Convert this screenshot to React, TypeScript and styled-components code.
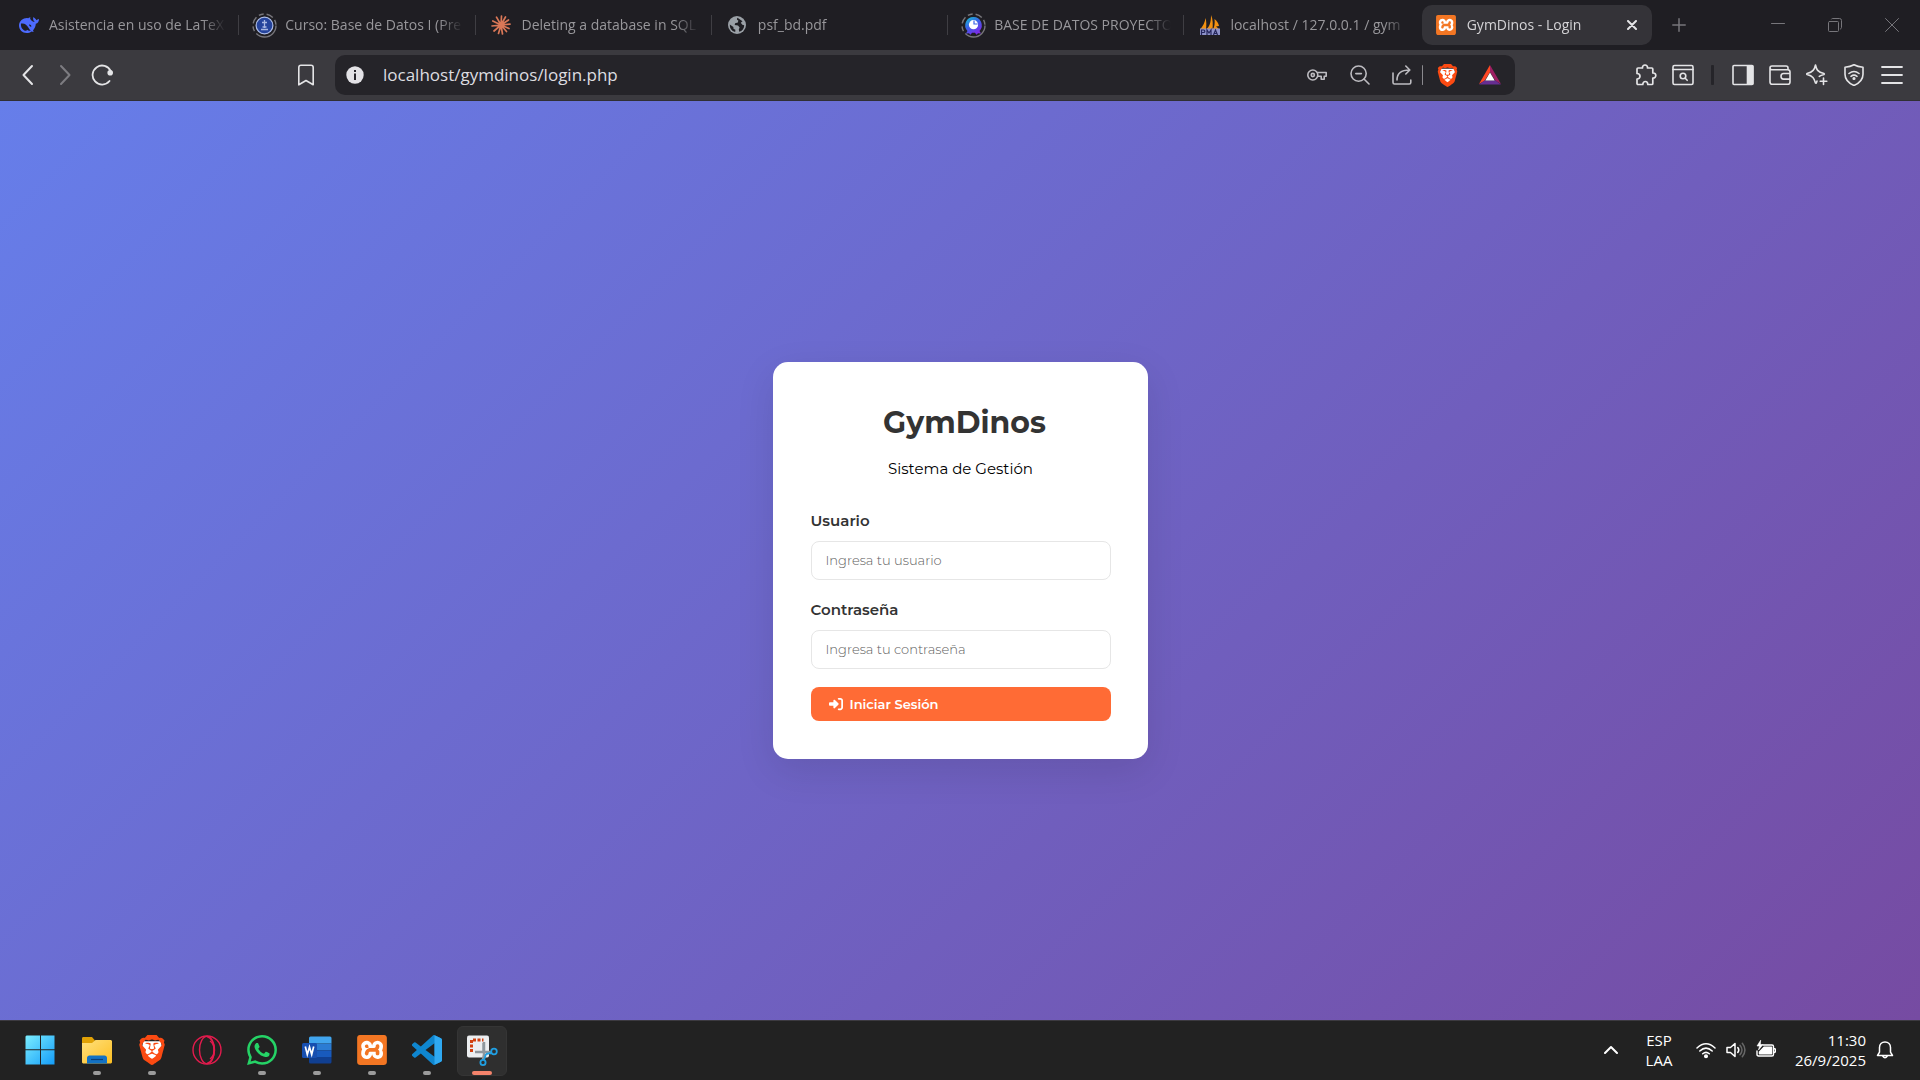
import React from 'react';
import styled, { createGlobalStyle } from 'styled-components';
import { SiBrave, SiXampp, SiWhatsapp } from 'react-icons/si';
import { FaRightToBracket } from 'react-icons/fa6';

const GlobalStyle = createGlobalStyle`
  *, *::before, *::after { box-sizing: border-box; }
  body { margin: 0; font-family: "Segoe UI", "Open Sans", "Noto Sans", sans-serif; }
  button, input { font: inherit; }
`;

const Screen = styled.div`
  display: flex;
  flex-direction: column;
  min-height: 100vh;
`;

/* ---------- tab strip ---------- */

const TabStrip = styled.header`
  display: flex;
  align-items: center;
  height: 50px;
  padding-left: 4px;
  background: #1f1e23;
`;

const TabList = styled.nav`
  display: flex;
  flex: 0 1 1654px;
  min-width: 0;
`;

const Tab = styled.div<{ $active?: boolean; $divided?: boolean }>`
  display: flex;
  align-items: center;
  flex: 1 1 0;
  min-width: 0;
  height: 40px;
  margin-right: 6px;
  padding: 0 8px 0 12px;
  border-radius: 10px;
  background: ${p => (p.$active ? '#343338' : 'transparent')};
  color: ${p => (p.$active ? '#d4d3d6' : '#98979b')};
  ${p => p.$divided && `
    &::after {
      content: '';
      width: 1px;
      height: 20px;
      margin-right: -13px;
      margin-left: 12px;
      background: #3f3e43;
    }
  `}
`;

const TabButton = styled.button`
  display: flex;
  align-items: center;
  flex: 1;
  gap: 8px;
  min-width: 0;
  padding: 0;
  border: 0;
  background: none;
  color: inherit;
`;

const Favicon = styled.span`
  display: flex;
  align-items: center;
  justify-content: center;
  flex: 0 0 25px;
  height: 25px;
`;

const TabTitle = styled.span`
  flex: 1;
  overflow: hidden;
  font-size: 14px;
  line-height: 20px;
  text-align: left;
  white-space: nowrap;
  mask-image: linear-gradient(90deg, #000 calc(100% - 24px), transparent);
`;

const IconButton = styled.button<{ $w?: number; $color?: string }>`
  display: flex;
  align-items: center;
  justify-content: center;
  flex: 0 0 ${p => p.$w ?? 37}px;
  height: 36px;
  padding: 0;
  border: 0;
  background: none;
  color: ${p => p.$color ?? '#e4e4e6'};
`;

const WindowControls = styled.div`
  display: flex;
  margin-left: auto;
`;

/* ---------- toolbar ---------- */

const Toolbar = styled.div`
  display: flex;
  align-items: center;
  height: 51px;
  padding: 0 10px 0 9px;
  border-bottom: 1px solid #302f34;
  background: #3b3a3f;
`;

const NavGroup = styled.div`
  display: flex;
  flex: 0 0 278px;
`;

const AddressBar = styled.div`
  display: flex;
  align-items: center;
  flex: 1;
  height: 40px;
  margin-left: 11px;
  padding: 0 7px 0 1px;
  border-radius: 10px;
  background: #252429;
`;

const AddressInput = styled.input`
  flex: 1;
  min-width: 0;
  padding: 0;
  margin-left: 10px;
  border: 0;
  outline: 0;
  background: none;
  color: #dddde0;
  font-size: 17px;
  line-height: 24px;
`;

const Divider = styled.span<{ $color: string; $thick?: boolean }>`
  width: ${p => (p.$thick ? 3 : 1)}px;
  height: 20px;
  border-radius: 1px;
  background: ${p => p.$color};
`;

const ExtensionGroup = styled.div`
  display: flex;
  align-items: center;
  margin-left: 112px;
`;

/* ---------- login page ---------- */

const Page = styled.main`
  display: flex;
  align-items: center;
  justify-content: center;
  flex: 1;
  background: linear-gradient(135deg, #667eea 0%, #764ba2 100%);
  font-family: Montserrat, Inter, sans-serif;
`;

const Card = styled.form`
  width: 375px;
  padding: 39px 37px 38px 38px;
  border-radius: 15px;
  background: #fff;
  box-shadow: 0 12px 38px rgba(0, 0, 0, 0.1);
`;

const CardHeader = styled.div`
  display: flex;
  flex-direction: column;
  gap: 12px;
  margin-bottom: 28px;
  text-align: center;
`;

const Title = styled.h1`
  margin: 0;
  padding-left: 8px;
  color: #333;
  font-size: 30px;
  font-weight: 700;
  line-height: 44px;
`;

const Subtitle = styled.p`
  margin: 0;
  color: #000;
  font-size: 15px;
  line-height: 24px;
`;

const Field = styled.div`
  display: flex;
  flex-direction: column;
  gap: 8px;
  margin-bottom: 18px;
`;

const Label = styled.label`
  color: #333;
  font-size: 15px;
  font-weight: 600;
  line-height: 24px;
`;

const TextInput = styled.input`
  width: 100%;
  height: 39px;
  padding: 0 14px 2px;
  border: 1px solid #e6e6e6;
  border-radius: 8px;
  background: #fff;
  color: #333;
  font-size: 13px;
  &::placeholder { color: #606060; font-weight: 300; opacity: 1; }
`;

const SubmitButton = styled.button`
  display: flex;
  align-items: center;
  gap: 7px;
  width: 100%;
  height: 34px;
  padding: 0 18px;
  border: 0;
  border-radius: 8px;
  background: #ff6b35;
  color: #fff;
  font-size: 13px;
  font-weight: 600;
`;

/* ---------- taskbar ---------- */

const Taskbar = styled.footer`
  display: flex;
  align-items: center;
  height: 60px;
  padding: 0 16px 0 15px;
  border-top: 1px solid #3c3a40;
  background: #222;
  color: #fff;
`;

const AppList = styled.div`
  display: flex;
  gap: 5px;
  margin-left: 7px;
`;

const AppButton = styled.button<{ $state?: 'open' | 'active' }>`
  display: flex;
  flex-direction: column;
  align-items: center;
  justify-content: space-between;
  width: 50px;
  height: 50px;
  padding: 8px 0 0;
  border: 1px solid ${p => (p.$state === 'active' ? '#353535' : 'transparent')};
  border-radius: 6px;
  background: ${p => (p.$state === 'active' ? '#2f2f2f' : 'none')};
  &::after {
    content: '';
    width: ${p => (p.$state === 'active' ? 20 : 8)}px;
    height: 4px;
    border-radius: 2px;
    background: ${p => (p.$state === 'active' ? '#f4836b' : p.$state === 'open' ? '#9b9b9b' : 'transparent')};
  }
`;

const Tray = styled.div`
  display: flex;
  align-items: center;
  margin-left: auto;
`;

const TrayButton = styled.button<{ $w: number; $align?: string }>`
  display: flex;
  flex-direction: column;
  align-items: ${p => p.$align ?? 'center'};
  justify-content: center;
  width: ${p => p.$w}px;
  height: 50px;
  padding: 0 0 2px;
  border: 0;
  background: none;
  color: #fff;
  font-size: 15px;
  line-height: 20px;
`;

/* ---------- drawings ---------- */

const Line = ({ size = 22, w = 1.6, box = 24, children }: { size?: number; w?: number; box?: number; children: React.ReactNode }) => (
  <svg width={size} height={size} viewBox={`0 0 ${box} ${box}`} fill="none" stroke="currentColor" strokeWidth={w} strokeLinecap="round" strokeLinejoin="round" aria-hidden="true">
    {children}
  </svg>
);

const BraveLogo = ({ size }: { size: number }) => (
  <svg width={size} height={size} viewBox="0 0 24 24" aria-hidden="true">
    <path fill="#fff" d="M5 5h14l1 5-2 7-6 5-6-5-2-7z" />
    <SiBrave size={24} color="#fb4a12" />
  </svg>
);

const XamppLogo = ({ size }: { size: number }) => (
  <svg width={size} height={size} viewBox="0 0 24 24" aria-hidden="true">
    <rect x="1" y="1" width="22" height="22" rx="2" fill="#fff" />
    <SiXampp size={24} color="#f37623" />
  </svg>
);

const WhaleIcon = () => (
  <svg width="20" height="16" viewBox="0 0 20 16" aria-hidden="true">
    <path fill="#4d6bfe" d="M8 1C4 1 0 4 0 8.500 0 13 3.500 16 7.500 16c2 0 3.600-.5 5-1.500l2.200.6-.7-1.700c1.800-2 2.700-4.400 2.800-6.600C18.800 6.300 20 4.500 20 2c-1.200.2-2 .7-2.500 1.300C16.800 1.800 15.500 1.200 14.400 0c-.8 2 .2 4.200 1.500 5-1.500.3-3.200-1-4.300-2.500-.7-.8-.5-1.500 0-2C10.400.2 9.500.8 9.300 1.200z" />
    <path fill="#1f1e23" d="M2 6.500c3.500-.7 6.200 1.700 7.500 4.200.8 1.400 1.500 2.300 2.200 2.800-1.500.6-2.700 0-3.700-.8-.4 1-1 1.300-1.800 1.100C3.500 13 1.500 10 2 6.500zM10 7.500c1.200-.3 2.300.6 2.500 2-1 .5-2.400-.5-2.500-2z" />
  </svg>
);

const MoodleIcon = () => (
  <svg width="25" height="25" viewBox="0 0 25 25" fill="none" aria-hidden="true">
    <circle cx="12.5" cy="12.5" r="11.5" stroke="#77767b" strokeWidth="1.4" strokeDasharray="27 3 5 3 7 3 5 3 7 3 5 3" />
    <circle cx="12.5" cy="12.5" r="8.4" fill="#24439c" stroke="#aebde5" strokeWidth="1.2" />
    <path d="M12.5 7v8M10 9.500h5M9 16.500h7M10.500 14h4" stroke="#a7b6e2" strokeWidth="1.3" />
  </svg>
);

const ProjectIcon = () => (
  <svg width="25" height="25" viewBox="0 0 25 25" fill="none" aria-hidden="true">
    <defs>
      <linearGradient id="proj" x1="0" y1="0" x2="0.6" y2="1">
        <stop offset="0" stopColor="#12c9d2" />
        <stop offset="0.5" stopColor="#3a62e8" />
        <stop offset="1" stopColor="#7d2ae8" />
      </linearGradient>
    </defs>
    <circle cx="12.5" cy="12.5" r="11.5" stroke="#77767b" strokeWidth="1.4" strokeDasharray="27 3 5 3 7 3 5 3 7 3 5 3" />
    <path d="M12.500 4a8.300 8.300 0 0 1 6 14l1.500 2.500-3-.2-1.500 1.500-1.500-2h-3l-1.500 2L8 20.300l-3 .2L6.500 18a8.300 8.300 0 0 1 6-14z" fill="url(#proj)" />
    <circle cx="12.5" cy="11.7" r="4.6" fill="#fff" />
    <path d="M13 7.500V11h3.600" stroke="#3a62e8" strokeWidth="1.2" />
  </svg>
);

const ClaudeIcon = () => (
  <svg width="20" height="20" viewBox="0 0 20 20" stroke="#d97757" strokeWidth="1.7" strokeLinecap="round" aria-hidden="true">
    <path d="M10 10 10.500 1M10 10 14.500 2M10 10l7.500-5M10 10l9-.8M10 10l8 3.500M10 10l5.500 6.500M10 10l1.500 9M10 10 7.500 18.500M10 10l-7 6M10 10l-9 1M10 10 1.800 6M10 10 5.500 2.200" />
  </svg>
);

const GlobeIcon = () => (
  <svg width="20" height="20" viewBox="0 0 20 20" aria-hidden="true">
    <circle cx="10" cy="10" r="9" fill="#9aa0a6" />
    <path d="M10.500 2.800c-1 1.400-.6 2.400.8 2.600l-.4 2.200-2.800.6-.4 1.900 3.300.5 1.600 1.900-.8 2 .4 2.200c3-.7 5-3.200 5-6.500l-1.900-.4-1.500-2 1.700-1.500M2.800 9.500l3.600 2.400.1 1.800 1.900 1.100-.2 2.200A7.300 7.300 0 0 1 2.800 9.500z" fill="#1f1e23" />
  </svg>
);

const PmaIcon = () => (
  <svg width="22" height="20" viewBox="0 0 22 20" aria-hidden="true">
    <path d="M1.500 14C4 11 6 7 6.500 3c1 3 1 8 .5 11zM7.500 14c4-3 4.500-9 4.500-14 2 4 2 10 1.500 14zM14 14c1.500-2 2-6 1.500-10 2.500 2 4 4 4.500 7l-3 .5 3 2.500z" fill="#f29111" />
    <path d="M1 13.500h20v6.500H1z" fill="#8d92c8" />
    <path d="M2.500 20v-5h2c1.800 0 1.800 2.500 0 2.500h-2M8 20v-5l2 3 2-3v5M14.500 20l2-5 2 5M15 18.500h3" fill="none" stroke="#24265c" strokeWidth="1.2" />
  </svg>
);

const BatIcon = () => (
  <svg width="22" height="20" viewBox="0 0 22 20" aria-hidden="true">
    <path d="M11 0 0 19l5.500-3.200L11 7z" fill="#ff4724" />
    <path d="m11 0 11 19-5.500-3.200L11 7z" fill="#9e1f63" />
    <path d="M0 19.500h22l-5.500-4h-11z" fill="#662d91" />
    <path d="m11 7.500 4.700 8H6.300z" fill="#fff" />
  </svg>
);

const WindowsIcon = () => (
  <svg width="30" height="30" viewBox="0 0 30 30" aria-hidden="true">
    <defs>
      <linearGradient id="win" gradientUnits="userSpaceOnUse" x1="0" y1="0" x2="30" y2="30">
        <stop offset="0" stopColor="#7defff" />
        <stop offset="1" stopColor="#129bf8" />
      </linearGradient>
    </defs>
    <path d="M1.500.5H15v13.700H.5V1.500zM16 .5h13.500v13.700H16zM.5 15.200H15v14.300H.5zM16 15.200h13.500v14.300H16z" fill="url(#win)" />
  </svg>
);

const FolderIcon = () => (
  <svg width="30" height="30" viewBox="0 0 30 30" aria-hidden="true">
    <defs>
      <linearGradient id="fold" x1="0" y1="0" x2="1" y2="1">
        <stop offset="0" stopColor="#ffe07d" />
        <stop offset="1" stopColor="#fdbf22" />
      </linearGradient>
    </defs>
    <path d="M0 3.500C0 2.500.5 2 1.500 2H10l3 3.500V10H0z" fill="#e0a106" />
    <path d="M0 8h10l3.500-3H29l1 1v21.500l-1 1H1l-1-1z" fill="url(#fold)" />
    <path d="M5 28.500V23c0-1.500 1-2.500 2.500-2.500h15c1.500 0 2.500 1 2.500 2.500v5.500z" fill="#1372c4" />
    <path d="M9 24.500h12" stroke="#0b3f78" strokeWidth="1.2" />
  </svg>
);

const OperaIcon = () => (
  <svg width="30" height="30" viewBox="0 0 30 30" fill="none" stroke="#e21b4d" strokeWidth="1.4" aria-hidden="true">
    <circle cx="15" cy="15" r="14" />
    <ellipse cx="15" cy="15" rx="7.5" ry="13.6" />
    <path d="M18 6c5.500 4 5.500 14 0 18" />
    <path d="M15 1.500c9.500 2 9.500 25 0 27" />
  </svg>
);

const WordIcon = () => (
  <svg width="30" height="30" viewBox="0 0 30 30" aria-hidden="true">
    <path d="M7 3q0-1.500 1.500-1.500H28q1.500 0 1.500 1.500v5.500H7z" fill="#41a5ee" />
    <path d="M7 8.500h22.500v6.800H7z" fill="#2b7cd3" />
    <path d="M7 15.300h22.500V22H7z" fill="#185abd" />
    <path d="M7 22h22.500v5q0 1.500-1.500 1.500H8.500Q7 28.500 7 27z" fill="#103f91" />
    <rect x="0" y="8" width="15" height="15" rx="1.5" fill="#174fb0" />
    <path d="m3.300 11.500 2 8 2.200-7.500 2.200 7.500 2-8" fill="none" stroke="#fff" strokeWidth="1.7" />
  </svg>
);

const CodeIcon = () => (
  <svg width="30" height="30" viewBox="0 0 24 24" aria-hidden="true">
    <path fill="#0f86cf" d="M23.150 2.587 18.210.210a1.494 1.494 0 0 0-1.705.290l-9.460 8.630-4.120-3.128a.999.999 0 0 0-1.276.057L.327 7.261A1 1 0 0 0 .326 8.740L3.899 12 .326 15.260a1 1 0 0 0 .001 1.479L1.650 17.940a.999.999 0 0 0 1.276.057l4.120-3.128 9.460 8.630a1.492 1.492 0 0 0 1.704.290l4.942-2.377A1.500 1.500 0 0 0 24 20.060V3.939a1.500 1.500 0 0 0-.850-1.352zM18.004 17.448 10.826 12l7.178-5.448z" />
    <path fill="#2fa9f2" d="M18.004.15 23.150 2.587A1.500 1.500 0 0 1 24 3.939V20.060a1.500 1.500 0 0 1-.850 1.352L18.004 23.850z" />
  </svg>
);

const SnipIcon = () => (
  <svg width="32" height="31" viewBox="0 0 32 31" fill="none" aria-hidden="true">
    <rect x="1" y="0.5" width="22" height="22" rx="2" fill="#eceef0" />
    <path d="M5.500 17V5h12" stroke="#d2400f" strokeWidth="3" strokeDasharray="3 1.5" />
    <path d="M16 17.500V8h3v9.500" fill="#adb3b8" />
    <path d="M9 17h14.500l2 1.500M18 7v12.500l-1 5" stroke="#8f979d" strokeWidth="2.5" />
    <circle cx="28" cy="16.5" r="2.8" stroke="#209fe2" strokeWidth="1.8" />
    <circle cx="17" cy="27.5" r="2.6" stroke="#209fe2" strokeWidth="1.8" />
    <path d="m20 19 5.500-1.200M18 25l2-6" stroke="#209fe2" strokeWidth="1.8" />
  </svg>
);

const tabs = [
  { title: 'Asistencia en uso de LaTeX', icon: <WhaleIcon />, divided: true },
  { title: 'Curso: Base de Datos I (Pre', icon: <MoodleIcon />, divided: true },
  { title: 'Deleting a database in SQL', icon: <ClaudeIcon />, divided: true },
  { title: 'psf_bd.pdf', icon: <GlobeIcon />, divided: true },
  { title: 'BASE DE DATOS PROYECTO', icon: <ProjectIcon />, divided: true },
  { title: 'localhost / 127.0.0.1 / gym', icon: <PmaIcon />, divided: false },
];

export default function App() {
  return (
    <Screen>
      <GlobalStyle />
      <TabStrip>
        <TabList aria-label="Pestañas">
          {tabs.map(t => (
            <Tab key={t.title} $divided={t.divided}>
              <TabButton type="button">
                <Favicon>{t.icon}</Favicon>
                <TabTitle>{t.title}</TabTitle>
              </TabButton>
            </Tab>
          ))}
          <Tab $active>
            <TabButton type="button">
              <Favicon><XamppLogo size={20} /></Favicon>
              <TabTitle>GymDinos - Login</TabTitle>
            </TabButton>
            <IconButton $w={24} aria-label="Cerrar pestaña">
              <Line size={10} w={2} box={10}><path d="m1 1 8 8M9 1 1 9" /></Line>
            </IconButton>
          </Tab>
        </TabList>
        <IconButton $w={42} $color="#77767b" aria-label="Nueva pestaña">
          <Line size={14} w={1.5} box={14}><path d="M7 .8v12.400M.8 7h12.400" /></Line>
        </IconButton>
        <WindowControls>
          <IconButton $w={57} $color="#77767b" aria-label="Minimizar">
            <Line size={14} w={1} box={14}><path d="M.5 5.500h13" /></Line>
          </IconButton>
          <IconButton $w={57} $color="#77767b" aria-label="Restaurar">
            <Line size={14} w={1} box={14}><rect x=".5" y="3.5" width="10" height="10" rx="1" /><path d="M3.500 1q.2-.5 1-.5h7q2 0 2 2v7q0 1-1 1.500" /></Line>
          </IconButton>
          <IconButton $w={57} $color="#77767b" aria-label="Cerrar">
            <Line size={14} w={1} box={14}><path d="m.5.5 13 13M13.500.5l-13 13" /></Line>
          </IconButton>
        </WindowControls>
      </TabStrip>

      <Toolbar>
        <NavGroup>
          <IconButton aria-label="Atrás"><Line w={2} box={22}><path d="M15 2 6.500 11l8.500 9" /></Line></IconButton>
          <IconButton $color="#7d7c81" aria-label="Adelante"><Line w={2} box={22}><path d="M7 2l8.500 9L7 20" /></Line></IconButton>
          <IconButton aria-label="Recargar">
            <Line w={1.8} box={22}><path d="M18.500 17A9.500 9.500 0 1 1 19.700 7" /><circle cx="19.2" cy="8.7" r="1.9" fill="currentColor" /></Line>
          </IconButton>
        </NavGroup>
        <IconButton aria-label="Marcador"><Line w={1.6} box={22}><path d="M3.800 20.800V3.500q0-2.200 2.200-2.200h10q2.200 0 2.200 2.200v17.300L11 16.500z" /></Line></IconButton>
        <AddressBar>
          <IconButton aria-label="Información del sitio">
            <svg width="18" height="18" viewBox="0 0 18 18" aria-hidden="true"><circle cx="9" cy="9" r="8.7" fill="#e3e2e6" /><path d="M8 4h2v2H8zM8 7.500h2V14H8z" fill="#252429" /></svg>
          </IconButton>
          <AddressInput aria-label="Dirección" defaultValue="localhost/gymdinos/login.php" />
          <IconButton $w={43} $color="#bdbcc1" aria-label="Contraseñas">
            <Line size={20} w={1.6} box={20}><circle cx="5.8" cy="10" r="5" /><circle cx="5.8" cy="10" r="1.6" /><path d="M10.500 7.500h8.700v3.700h-2v3h-3v-3h-3.400" /></Line>
          </IconButton>
          <IconButton $w={43} $color="#bdbcc1" aria-label="Zoom">
            <Line size={20} w={1.6} box={20}><circle cx="8.6" cy="8.6" r="7.6" /><path d="m14 14 5 5M5.800 8.600h5.600" /></Line>
          </IconButton>
          <IconButton $w={41} $color="#bdbcc1" aria-label="Compartir">
            <Line size={20} w={1.6} box={20}><path d="M1 8v9.500Q1 19 2.500 19h14.800q1.500 0 1.500-1.500V15M5 15c0-6.500 4-10 12.500-10M13.800 1l4 4-4 4" /></Line>
          </IconButton>
          <Divider $color="#8a898e" />
          <IconButton $w={48} aria-label="Brave Shields"><BraveLogo size={23} /></IconButton>
          <IconButton aria-label="Brave Rewards"><BatIcon /></IconButton>
        </AddressBar>
        <ExtensionGroup>
          <IconButton aria-label="Extensiones">
            <Line w={1.7} box={22}><path d="M3 4h4.500c-.5-4 5.500-4 5 0h4.300q1 0 1 1v4c4-.4 4 5.400 0 5v5.500q0 1-1 1h-4c0-4-5-4-5 0H3q-1 0-1-1V15c4 0 4-5.500 0-5.500V5q0-1 1-1z" /></Line>
          </IconButton>
          <IconButton aria-label="Buscar en la página">
            <Line w={1.6} box={22}><rect x="1" y="1.5" width="20" height="19" rx="1.5" /><path d="M1 5.500h20" /><circle cx="11" cy="12" r="2.8" /><path d="m13.200 14.300 2 2" /></Line>
          </IconButton>
          <IconButton $w={23} as="span"><Divider $color="#252429" $thick /></IconButton>
          <IconButton aria-label="Barra lateral">
            <Line w={1.6} box={22}><rect x="1" y="1.5" width="20" height="19" rx="1" /><path d="M15.500 2h5v18h-5z" fill="currentColor" /></Line>
          </IconButton>
          <IconButton aria-label="Cartera">
            <Line w={1.6} box={22}><path d="M19 5.500V4q0-2-2-2H3Q1 2 1 4v14q0 2.300 2.300 2.300h15.400q2.300 0 2.300-2.300V8q0-2.300-2.300-2.300H3Q1 5.700 1 4M21 9.500h-6.500q-2.500 0-2.500 2.800t2.500 2.800H21" /></Line>
          </IconButton>
          <IconButton aria-label="Leo AI">
            <Line w={1.6} box={22}><path d="M9.500 1c1 4.500 2 7 8.500 8.500q.5.500 0 1c-2 .5-3.500 1-4.700 1.800M9.500 1C8.500 5.500 7 8 1 9.500q-.5.500 0 1C7 12 8 14 9.500 19c.5.500 1 0 1.500-2M17.500 14v6.500M14.200 17.300h6.600" /></Line>
          </IconButton>
          <IconButton $w={38} aria-label="VPN">
            <Line w={1.6} box={22}><path d="M11 .8c3 1.700 6 2.200 9 2.400v7c0 5-3.500 8.800-9 11.300C5.500 19 2 15.200 2 10.200v-7c3-.2 6-.7 9-2.400zM6 9.500q5-4 10 0M8 12.300q3-2.300 6 0" /><circle cx="11" cy="14.5" r=".8" fill="currentColor" /></Line>
          </IconButton>
          <IconButton aria-label="Menú"><Line w={1.8} box={22}><path d="M1 3h20M1 11h20M1 19h20" /></Line></IconButton>
        </ExtensionGroup>
      </Toolbar>

      <Page>
        <Card onSubmit={e => e.preventDefault()}>
          <CardHeader>
            <Title>GymDinos</Title>
            <Subtitle>Sistema de Gestión</Subtitle>
          </CardHeader>
          <Field>
            <Label htmlFor="usuario">Usuario</Label>
            <TextInput id="usuario" type="text" placeholder="Ingresa tu usuario" />
          </Field>
          <Field>
            <Label htmlFor="contrasena">Contraseña</Label>
            <TextInput id="contrasena" type="password" placeholder="Ingresa tu contraseña" />
          </Field>
          <SubmitButton type="submit"><FaRightToBracket size={14} aria-hidden="true" />Iniciar Sesión</SubmitButton>
        </Card>
      </Page>

      <Taskbar>
        <AppButton aria-label="Inicio"><WindowsIcon /></AppButton>
        <AppList>
          <AppButton $state="open" aria-label="Explorador de archivos"><FolderIcon /></AppButton>
          <AppButton $state="open" aria-label="Brave"><BraveLogo size={30} /></AppButton>
          <AppButton aria-label="Opera"><OperaIcon /></AppButton>
          <AppButton $state="open" aria-label="WhatsApp"><SiWhatsapp size={30} color="#25d366" /></AppButton>
          <AppButton $state="open" aria-label="Word"><WordIcon /></AppButton>
          <AppButton $state="open" aria-label="XAMPP"><XamppLogo size={30} /></AppButton>
          <AppButton $state="open" aria-label="Visual Studio Code"><CodeIcon /></AppButton>
          <AppButton $state="active" aria-label="Recortes"><SnipIcon /></AppButton>
        </AppList>
        <Tray>
          <TrayButton $w={46} aria-label="Iconos ocultos"><Line size={14} w={2} box={14}><path d="m1 10 6-6 6 6" /></Line></TrayButton>
          <TrayButton $w={50}><span>ESP</span><span>LAA</span></TrayButton>
          <TrayButton $w={44} aria-label="Wi-Fi">
            <Line size={20} w={1.5} box={20}><path d="M1 8q9-8.500 18 0M3.800 11q6.200-5.700 12.400 0M6.700 13.800q3.300-2.900 6.600 0" /><circle cx="10" cy="16.3" r="1.3" fill="currentColor" /></Line>
          </TrayButton>
          <TrayButton $w={16} aria-label="Volumen">
            <Line size={20} w={1.5} box={20}><path d="M1 7.500h3.500L9 3.500v13L4.500 12.500H1zM11.800 7.500q2 2.500 0 5" /><path d="M14 5.300q4 4.700 0 9.400M16.300 3.300q5.300 6.700 0 13.400" stroke="#666" /></Line>
          </TrayButton>
          <TrayButton $w={44} aria-label="Batería">
            <Line size={20} w={1.4} box={20}><path d="M7 5h9q1.500 0 1.500 1.500v8q0 1.500-1.500 1.500H2.500Q1 16 1 14.500V11M18 8.500q1.500 0 1.500 2t-1.500 2" /><path d="M8 7.200h7.500v6.600H3.500V12z" fill="currentColor" /><path d="M4.500.5 1 6h2.500l-1 4L7 4.500H4.500z" fill="currentColor" strokeWidth=".6" /></Line>
          </TrayButton>
          <TrayButton $w={78} $align="flex-end"><span>11:30</span><span>26/9/2025</span></TrayButton>
          <TrayButton $w={38} aria-label="Notificaciones">
            <Line size={18} w={1.5} box={18}><path d="M9 1c3.300 0 5.500 2.300 5.500 5.500v4.700l2 3.300h-15l2-3.300V6.500C3.500 3.300 5.700 1 9 1zM6.700 15q2.300 3.500 4.600 0" /></Line>
          </TrayButton>
        </Tray>
      </Taskbar>
    </Screen>
  );
}
